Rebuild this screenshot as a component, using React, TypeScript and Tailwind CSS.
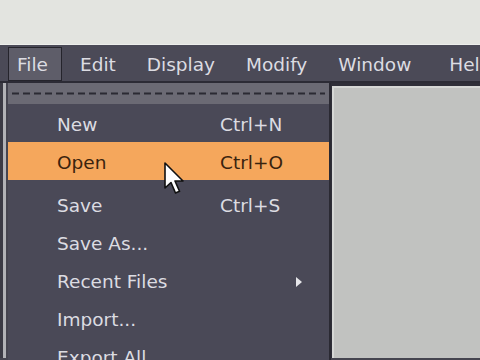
import React from "react";

const font = { fontFamily: '"DejaVu Sans", Verdana, sans-serif' };

const ITEMS_AFTER = [
  { label: "Save", shortcut: "Ctrl+S" },
  { label: "Save As..." },
  { label: "Recent Files", submenu: true },
  { label: "Import..." },
  { label: "Export All..." },
];

function Cursor() {
  return (
    <svg
      className="absolute left-[163px] top-[162px]"
      width="24"
      height="34"
      viewBox="0 0 24 34"
    >
      <path
        d="M2 1 L2 26 L8 20.5 L12.5 31 L16.5 29.3 L12 19 L20 19 Z"
        fill="#ffffff"
        stroke="#111111"
        strokeWidth="1.6"
        strokeLinejoin="round"
      />
    </svg>
  );
}

export default function App() {
  return (
    <div
      className="relative w-[480px] h-[360px] overflow-hidden bg-[#45444f] text-[18.5px] leading-none"
      style={font}
    >
      {/* top light strip */}
      <div className="h-[45px] bg-[#e3e4e0] border-b border-[#eeefec]" />

      {/* menubar */}
      <div className="h-[38px] bg-[#4b4a57] border-b-2 border-[#2c2b35] flex items-center text-[#dcdce2] whitespace-nowrap">
        <div className="ml-[8px] mt-[2px] h-[34px] flex items-center pt-[3px] pl-[8px] pr-[13px] bg-[#5e5d69] border border-[#25242c]">
          File
        </div>
        <span className="ml-[18px] pt-[5px]">Edit</span>
        <span className="ml-[31px] pt-[5px]">Display</span>
        <span className="ml-[31px] pt-[5px]">Modify</span>
        <span className="ml-[31px] pt-[5px]">Window</span>
        <span className="ml-[38px] pt-[5px]">Help</span>
      </div>

      {/* workspace */}
      <div className="flex h-[275px]">
        <div className="w-[3px] bg-[#3b3a44]" />
        <div className="w-[3px] bg-[#b2b2b6]" />
        <div className="w-[325px]" />
        <div className="flex-1 bg-[#2f2e38] pt-[3px] pl-[1px]">
          <div className="h-full bg-[#c1c2c0] border-t-2 border-l-2 border-[#d6d7d5]" />
        </div>
      </div>

      {/* File dropdown */}
      <div className="absolute left-[8px] top-[83px] w-[323px] h-[290px] bg-[#4a4957] border-r-2 border-[#2a2932] text-[#dcdce2]">
        <div className="h-[21px] bg-[#6b6a74] flex items-center px-[4px]">
          <svg width="314" height="3">
            <line
              x1="0"
              y1="1.5"
              x2="314"
              y2="1.5"
              stroke="#2b2a33"
              strokeWidth="2"
              strokeDasharray="7 4"
            />
          </svg>
        </div>
        <div className="h-[38px] flex items-center pt-[4px]">
          <span className="w-[212px] pl-[49px]">New</span>
          <span>Ctrl+N</span>
        </div>
        <div className="h-[38px] flex items-center pt-[4px] bg-[#f5a75c] text-[#3a230e]">
          <span className="w-[212px] pl-[49px]">Open</span>
          <span>Ctrl+O</span>
        </div>
        <div className="h-[5px]" />
        {ITEMS_AFTER.map((it) => (
          <div key={it.label} className="h-[38px] flex items-center pt-[4px]">
            <span className="w-[212px] pl-[49px] whitespace-nowrap">{it.label}</span>
            {it.shortcut && <span>{it.shortcut}</span>}
            {it.submenu && (
              <svg className="ml-[76px]" width="7" height="10" viewBox="0 0 7 10">
                <path d="M0 0 L6 5 L0 10 Z" fill="#e6e6ea" />
              </svg>
            )}
          </div>
        ))}
      </div>

      <Cursor />
    </div>
  );
}
